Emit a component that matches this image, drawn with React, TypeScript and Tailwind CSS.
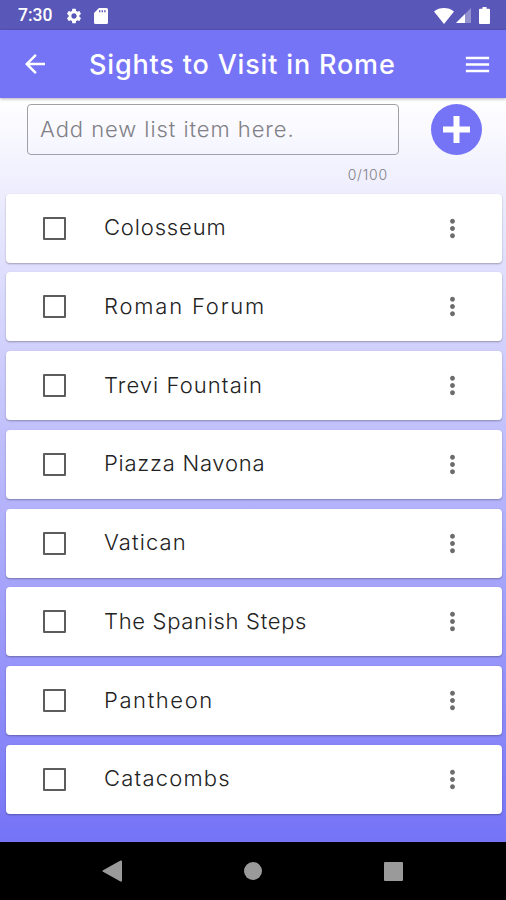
import { useState } from "react"
import { MdArrowBack, MdMenu, MdMoreVert, MdSettings } from "react-icons/md"

type Sight = {
  name: string
  tracking: string
}

const sights: Sight[] = [
  { name: "Colosseum", tracking: "tracking-[0.85px]" },
  { name: "Roman Forum", tracking: "tracking-[1.8px]" },
  { name: "Trevi Fountain", tracking: "tracking-[1.07px]" },
  { name: "Piazza Navona", tracking: "tracking-[0.75px]" },
  { name: "Vatican", tracking: "tracking-[1.1px]" },
  { name: "The Spanish Steps", tracking: "tracking-[0.68px]" },
  { name: "Pantheon", tracking: "tracking-[1.6px]" },
  { name: "Catacombs", tracking: "tracking-[1.2px]" },
]

function StatusBar() {
  return (
    <div className="flex h-[30px] shrink-0 items-center bg-[#5957b7] pt-px pl-[18px] pr-[16px] text-white">
      <span className="w-[47px] font-[Roboto] text-[17.5px] leading-none font-medium">7:30</span>
      <MdSettings className="h-[18px] w-[18px]" />
      <svg className="ml-[11px] h-[16px] w-[14px]" viewBox="0 0 14 16" fill="currentColor">
        <path fillRule="evenodd" d="M5 0h7.5A1.5 1.5 0 0 1 14 1.500v13a1.500 1.500 0 0 1-1.500 1.500h-11A1.500 1.500 0 0 1 0 14.500V5zM5 2.200v2h1.400v-2zm2.600 0v2H9v-2zm2.600 0v2h1.400v-2z" />
      </svg>
      <svg className="ml-auto h-[16px] w-[20px]" viewBox="0 0 20 16" fill="currentColor">
        <path d="M10 16 0 3.400C2.800 1.200 6.200 0 10 0s7.200 1.200 10 3.400z" />
      </svg>
      <svg className="ml-[2px] h-[15px] w-[15px]" viewBox="0 0 15 15" fill="currentColor">
        <path opacity=".35" d="M15 0v15H0z" />
        <path d="M9 6v9H0z" />
      </svg>
      <svg className="ml-[8px] h-[17px] w-[11px]" viewBox="0 0 11 17" fill="currentColor">
        <path d="M3.500 0h4v1.700H10a1 1 0 0 1 1 1V16a1 1 0 0 1-1 1H1a1 1 0 0 1-1-1V2.700a1 1 0 0 1 1-1h2.500z" />
      </svg>
    </div>
  )
}

function Header() {
  return (
    <header className="z-10 flex h-[68px] shrink-0 items-center bg-[#7674f6] pl-[20px] pr-[13px] text-white shadow-[0_1px_3px_rgba(0,0,0,0.3)]">
      <MdArrowBack className="h-[30px] w-[30px]" />
      <h1 className="ml-[39px] text-[27px] leading-none font-medium tracking-[0.83px] whitespace-nowrap">
        Sights to Visit in Rome
      </h1>
      <MdMenu className="ml-auto h-[31px] w-[31px]" />
    </header>
  )
}

function SightRow({ sight }: { sight: Sight }) {
  const [checked, setChecked] = useState(false)

  return (
    <li className="flex h-[69px] items-center rounded-[4px] bg-white pl-[37px] pr-[35px] shadow-[0_1px_2px_rgba(0,0,0,0.3)]">
      <button
        aria-label={sight.name}
        onClick={() => setChecked(!checked)}
        className={`h-[23px] w-[23px] rounded-[1px] border-2 border-[#5c5c5c] ${checked ? "bg-[#7674f6]" : ""}`}
      />
      <span className={`ml-[38px] pb-[2px] text-[22px] leading-none font-light whitespace-nowrap text-[#222] ${sight.tracking}`}>
        {sight.name}
      </span>
      <MdMoreVert className="ml-auto h-[29px] w-[29px] text-[#6c6c6c]" />
    </li>
  )
}

export default function App() {
  const [text, setText] = useState("")

  return (
    <div className="flex h-[900px] w-[506px] flex-col overflow-hidden bg-black font-[Inter,sans-serif]">
      <StatusBar />
      <Header />

      <main className="h-[744px] shrink-0 bg-linear-to-b/srgb from-white to-[#7573f7]">
        <div className="flex pt-[6px] pl-[27px]">
          <div className="w-[372px]">
            <input
              value={text}
              maxLength={100}
              onChange={(e) => setText(e.target.value)}
              placeholder="Add new list item here."
              className="block h-[51px] w-full rounded-[4px] border border-[#a0a0a6] pb-px pl-[12px] text-[22px] font-light tracking-[0.94px] outline-none placeholder:text-[#808086]"
            />
            <p className="mt-[13px] pr-[11px] text-right text-[14px] leading-[14px] font-light tracking-[0.8px] text-[#808086]">
              {text.length}/100
            </p>
          </div>
          <button aria-label="Add" className="ml-[32px] flex h-[51px] w-[51px] items-center justify-center rounded-full bg-[#7674f6]">
            <svg className="h-[27px] w-[27px]" viewBox="0 0 27 27" fill="#fff">
              <path d="M10.500 0h6v10.500H27v6H16.500V27h-6V16.500H0v-6h10.500z" />
            </svg>
          </button>
        </div>

        <ul className="mt-[11.500px] flex flex-col gap-[9.75px] pr-[4px] pl-[6px]">
          {sights.map((sight) => (
            <SightRow key={sight.name} sight={sight} />
          ))}
        </ul>
      </main>

      <nav className="flex h-[58px] items-center bg-black pl-[102px] text-[#9a9a9a]">
        <svg className="h-[22px] w-[20px]" viewBox="0 0 20 22" fill="currentColor">
          <path d="M18.500.500Q20 0 20 1.500v19q0 1.500-1.500 1L.600 11.600Q0 11 .600 10.400z" />
        </svg>
        <span className="ml-[122px] h-[18px] w-[18px] rounded-full bg-[#9a9a9a]" />
        <span className="ml-[122px] h-[19px] w-[19px] rounded-[1px] bg-[#9a9a9a]" />
      </nav>
    </div>
  )
}
